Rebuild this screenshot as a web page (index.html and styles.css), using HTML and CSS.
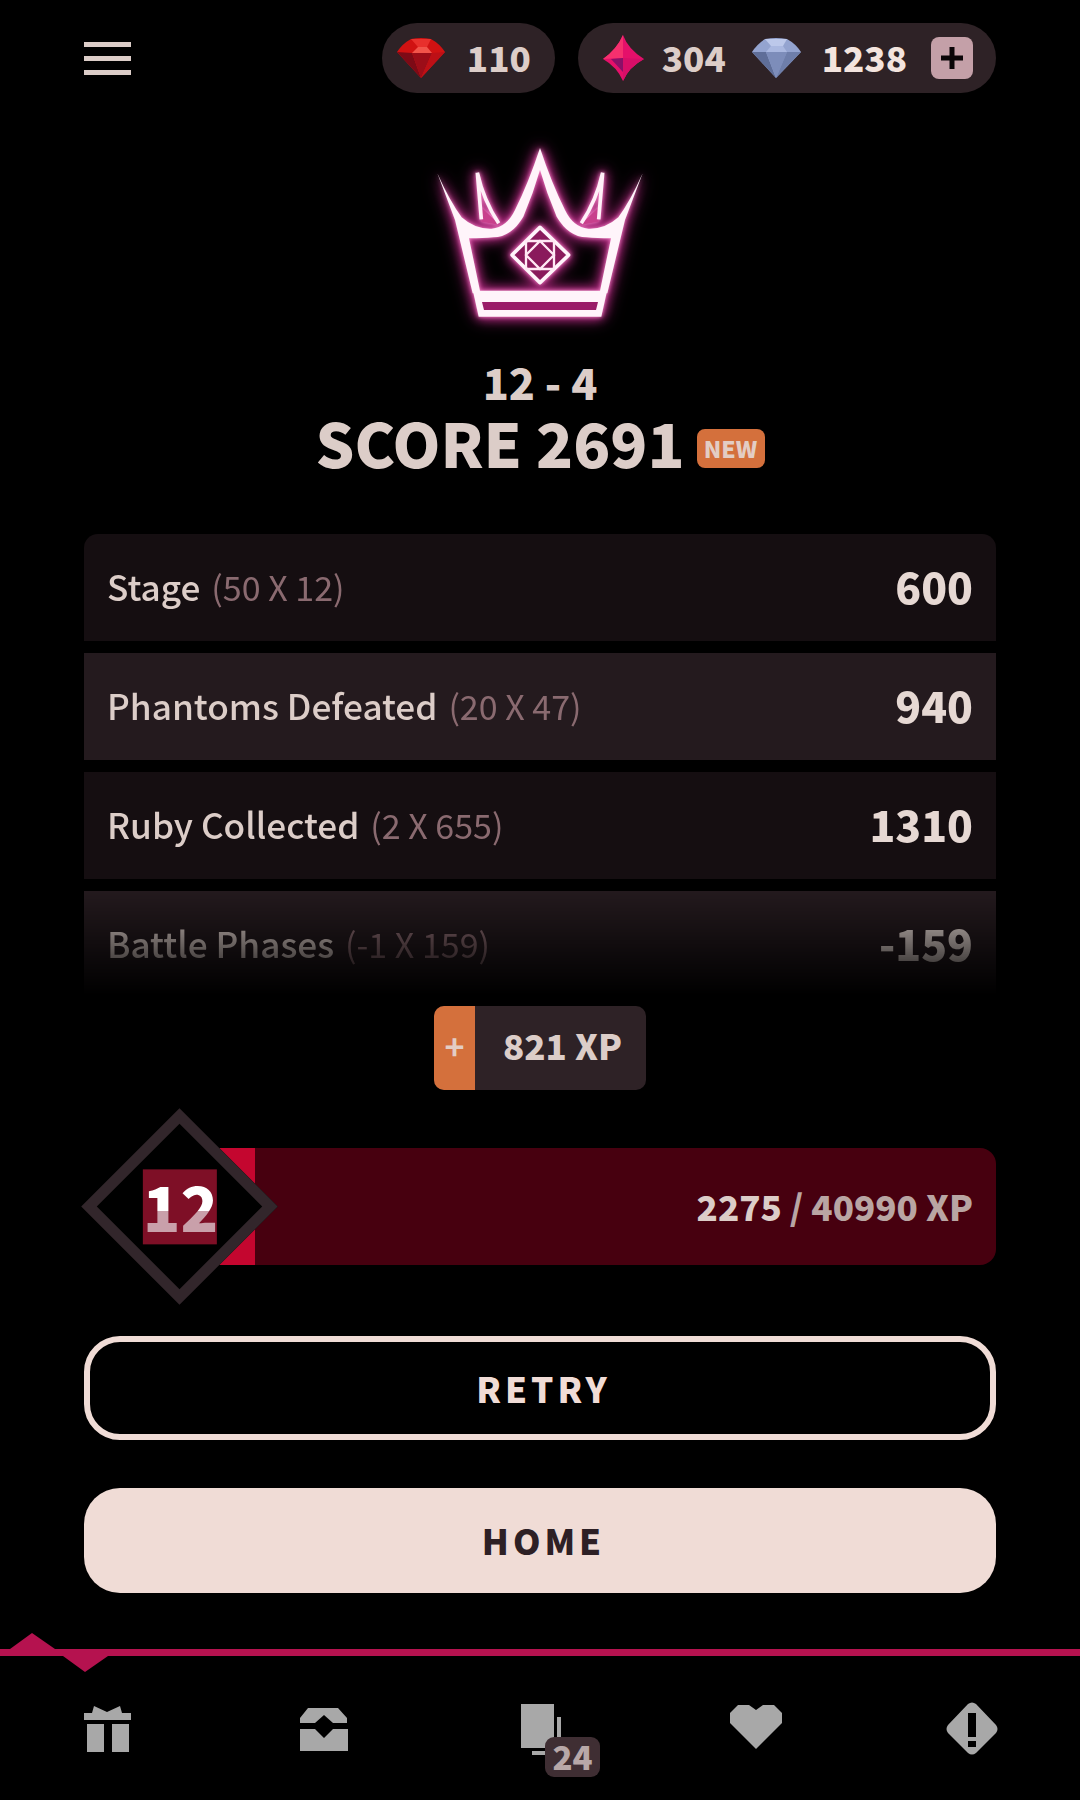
FILE: index.html
```html
<!DOCTYPE html>
<html lang="en">
<head>
  <meta charset="UTF-8">
  <title>Stage result</title>
  <link rel="stylesheet" href="styles.css">
</head>
<body>
  <div class="page">
    <header class="topbar">
      <button class="menu-btn"><span></span><span></span><span></span></button>
      <div class="wallet">
        <div class="pill">
          <svg class="gem" width="49" height="40" viewBox="0 0 49 40">
            <path d="M0 14Q5 6 14 1Q24 -1 34 1Q43 6 48 14L24 40z" fill="#d01212"/>
            <polygon points="14,1 34,1 30,9 21,9" fill="#e8302c"/>
            <polygon points="21,9 30,9 35,15 15,15" fill="#f2544a"/>
            <polygon points="0,14 15,15 24,40" fill="#7d0a16"/>
            <polygon points="15,15 35,15 24,40" fill="#9c0d18"/>
            <polygon points="35,15 48,14 24,40" fill="#bd1016"/>
          </svg>
          <span class="amount">110</span>
        </div>
        <div class="pill pill-wide">
          <svg class="gem" width="43" height="46" viewBox="0 0 43 46">
            <path d="M21 0Q26 14 42 24Q27 32 21 46Q15 32 1 24Q15 14 21 0z" fill="#e5106a"/>
            <path d="M21 0Q15 14 1 24L21 23z" fill="#f5306e"/>
            <path d="M21 23L42 24Q27 32 21 46z" fill="#d80e68"/>
            <polygon points="9,24 21,23 21,37" fill="#8a1068"/>
          </svg>
          <span class="amount amount-mid">304</span>
          <svg class="gem gem-diamond" width="49" height="40" viewBox="0 0 49 40">
            <path d="M0 14Q5 6 13 1Q24 -1 35 1Q44 6 49 14L24 40z" fill="#94a4d0"/>
            <polygon points="13,1 35,1 31,8 19,8" fill="#bcc8ea"/>
            <polygon points="19,8 31,8 35,14 14,14" fill="#aab8e0"/>
            <polygon points="0,14 14,14 24,40" fill="#5f6e98"/>
            <polygon points="14,14 35,14 24,40" fill="#7d8dba"/>
            <polygon points="35,14 49,14 24,40" fill="#6e7eaa"/>
          </svg>
          <span class="amount amount-light">1238</span>
          <button class="add-btn">
            <svg width="24" height="24" viewBox="0 0 24 24"><path d="M9.500 1h5v8.500H23v5h-8.500V23h-5v-8.500H1v-5h8.500z" fill="#0a0507"/></svg>
          </button>
        </div>
      </div>
    </header>

    <div class="crown">
      <svg width="280" height="200" viewBox="0 0 840 600">
        <path class="crown-tint" d="M247 235L244 275L298 284zM593 235L596 275L542 284z"/>
        <path class="crown-spike" d="M232 128L244 268M232 128Q250 210 296 280M608 128L596 268M608 128Q590 210 544 280"/>
        <path class="crown-body" fill-rule="evenodd" d="M112 130Q150 215 185 262Q225 298 275 296Q320 292 345 240Q385 160 420 54Q455 160 495 240Q520 292 565 296Q615 298 655 262Q690 215 728 130L675 270L622 490H218L165 270zM240 482L207 325Q250 325 280 322Q335 320 370 260Q400 190 420 120Q440 190 470 260Q505 320 560 322Q590 325 633 325L600 482z"/>
        <path class="crown-body" d="M220 488H620L604 560H236z"/>
        <path class="crown-band" d="M246 516H594L588 540H252z"/>
        <path class="crown-gem" d="M420 292L506 375L420 458L336 375z"/>
        <path class="crown-thin" d="M378 333H462V417H378zM420 333L462 375L420 417L378 375z"/>
      </svg>
    </div>

    <div class="stage-no">12 - 4</div>
    <div class="score">
      <span class="score-text">SCORE 2691</span>
      <span class="new-tag">NEW</span>
    </div>

    <div class="breakdown">
      <div class="row">
        <div class="row-label">Stage <span class="row-calc">(50 X 12)</span></div>
        <div class="row-value">600</div>
      </div>
      <div class="row row-alt">
        <div class="row-label">Phantoms Defeated <span class="row-calc">(20 X 47)</span></div>
        <div class="row-value">940</div>
      </div>
      <div class="row">
        <div class="row-label">Ruby Collected <span class="row-calc">(2 X 655)</span></div>
        <div class="row-value">1310</div>
      </div>
      <div class="row row-alt">
        <div class="row-label">Battle Phases <span class="row-calc">(-1 X 159)</span></div>
        <div class="row-value">-159</div>
      </div>
    </div>

    <div class="xp-gain">
      <span class="xp-plus">+</span>
      <span class="xp-amount">821 XP</span>
    </div>

    <div class="level">
      <div class="level-badge">
        <div class="level-num"><span>12</span></div>
      </div>
      <div class="level-bar">
        <div class="level-fill" style="width: 75px"></div>
        <div class="level-text"><b>2275</b> / 40990 XP</div>
      </div>
    </div>

    <button class="btn btn-outline">RETRY</button>
    <button class="btn btn-solid">HOME</button>

    <nav class="tabs">
      <div class="tab-marker">
        <svg width="120" height="40" viewBox="0 0 120 40">
          <polygon points="10,16 32,0 55,16" fill="#b5124f"/>
          <polygon points="63,23 108,23 85,39" fill="#b5124f"/>
        </svg>
      </div>
      <div class="tab-icons">
        <svg class="tab-icon" width="48" height="48" viewBox="0 0 48 48">
          <path d="M10 2L23 8 36 2 38 9H47V16H0V9H8zM3 20H20V48H3zM28 20H45V48H28z" fill="#a8a8a8"/>
        </svg>
        <svg class="tab-icon" width="48" height="48" viewBox="0 0 48 48">
          <path d="M0 14L8 4H38L47 14V19H33L24 11 15 19H0z" fill="#a8a8a8"/>
          <path d="M0 25H15L24 34 33 25H48V47H0z" fill="#a8a8a8"/>
        </svg>
        <div class="tab-cards">
          <svg class="tab-icon" width="48" height="56" viewBox="0 0 48 56">
            <path d="M5 0H38V44H5zM41 13H45V40H41zM16 47H40V51H16z" fill="#a8a8a8"/>
          </svg>
          <span class="tab-badge">24</span>
        </div>
        <svg class="tab-icon" width="54" height="48" viewBox="0 0 54 48">
          <path d="M9 1H20L27 6 34 1H45L53 9V19L27 45 1 19V9z" fill="#a8a8a8"/>
        </svg>
        <svg class="tab-icon" width="54" height="54" viewBox="0 0 54 54">
          <path transform="translate(0 -2)" fill-rule="evenodd" d="M23 2Q27 -1 31 2L51 23Q54 27 51 31L31 51Q27 54 23 51L3 31Q0 27 3 23zM23 11V35H31V11zM23 39V45H31V39z" fill="#a8a8a8"/>
        </svg>
      </div>
    </nav>
  </div>
</body>
</html>
```

FILE: styles.css
```css
* {
  box-sizing: border-box;
}

body {
  margin: 0;
  background-color: #000000;
  font-family: "Noto Sans CJK JP", "Noto Sans", sans-serif;
  color: #dccdc8;
}

button {
  font-family: inherit;
  padding: 0;
  border: none;
  background: none;
  cursor: pointer;
}

.page {
  width: 1080px;
  height: 1800px;
  padding: 23px 84px 0;
  overflow: hidden;
}

/* Top bar */
.topbar {
  display: flex;
  justify-content: space-between;
  align-items: center;
  height: 70px;
}

.menu-btn {
  display: flex;
  flex-direction: column;
  gap: 9px;
  width: 47px;
}

.menu-btn span {
  display: block;
  height: 5px;
  background-color: #dccdc8;
}

.wallet {
  display: flex;
  gap: 23px;
}

.pill {
  display: flex;
  align-items: center;
  height: 70px;
  padding: 0 24px 0 15px;
  background-color: #2e2226;
  border-radius: 35px;
}

.pill-wide {
  padding: 0 23px 0 24px;
}

.gem {
  flex: none;
}

.gem-diamond {
  margin-left: 26px;
}

.amount {
  margin-left: 21px;
  padding-bottom: 2px;
  font-size: 35px;
  font-weight: 900;
  line-height: 68px;
  color: #dccdc8;
}

.amount-mid {
  margin-left: 17px;
}

.amount-light {
  color: #f3e4de;
}

.add-btn {
  display: flex;
  justify-content: center;
  align-items: center;
  width: 42px;
  height: 42px;
  margin-left: 24px;
  background-color: #c4a0a8;
  border-radius: 8px;
}

/* Crown */
.crown {
  display: flex;
  justify-content: center;
  margin-top: 37px;
}

.crown svg {
  filter: drop-shadow(0 0 2px #ff90d0) drop-shadow(0 0 5px #b02880) drop-shadow(0 0 7px #98206c);
}

.crown-body {
  fill: #fff4fa;
}

.crown-spike {
  fill: none;
  stroke: #fff0f8;
  stroke-width: 11;
}

.crown-tint {
  fill: #c8408c;
}

.crown-band {
  fill: #9a1c68;
}

.crown-gem {
  fill: #8a1a5c;
  stroke: #fff4fa;
  stroke-width: 11;
  stroke-linejoin: round;
}

.crown-thin {
  fill: none;
  stroke: #ffe8f4;
  stroke-width: 7;
}

/* Score */
.stage-no {
  margin-top: 27px;
  font-size: 43px;
  font-weight: 900;
  line-height: 48px;
  text-align: center;
}

.score {
  display: flex;
  justify-content: center;
  align-items: center;
  gap: 12px;
  height: 76px;
  margin-top: -1px;
}

.score-text {
  font-size: 61px;
  font-weight: 900;
  line-height: 76px;
}

.new-tag {
  width: 68px;
  height: 39px;
  margin-top: 13px;
  background-color: #d4703c;
  border-radius: 8px;
  font-size: 23px;
  font-weight: 900;
  line-height: 39px;
  text-align: center;
  color: #e3cdc4;
}

/* Score breakdown */
.breakdown {
  display: flex;
  flex-direction: column;
  gap: 12px;
  height: 461px;
  margin-top: 54px;
  overflow: hidden;
  -webkit-mask-image: linear-gradient(#000 355px, transparent 461px);
  mask-image: linear-gradient(#000 355px, transparent 461px);
}

.row {
  display: flex;
  flex: none;
  justify-content: space-between;
  align-items: center;
  height: 107px;
  padding: 0 23px 4px;
  background-color: #150e11;
}

.row:first-child {
  border-radius: 14px 14px 0 0;
}

.row-alt {
  background-color: #241a1e;
}

.row-label {
  font-size: 35.200px;
  font-weight: 500;
  color: #dccdc8;
}

.row-calc {
  margin-left: 3px;
  font-size: 34px;
  font-weight: 400;
  color: #8a6a70;
}

.row-value {
  font-size: 42.500px;
  font-weight: 900;
  color: #e6d8d3;
}

/* XP gained */
.xp-gain {
  display: flex;
  width: 212px;
  height: 84px;
  margin: 11px auto 0;
  border-radius: 10px;
  background-color: #2e2226;
  overflow: hidden;
}

.xp-plus {
  width: 41px;
  background-color: #d4703c;
  font-size: 34px;
  font-weight: 700;
  line-height: 80px;
  text-align: center;
  color: #e3cdc4;
}

.xp-amount {
  flex: 1;
  padding-left: 4px;
  font-size: 35px;
  font-weight: 900;
  line-height: 78px;
  text-align: center;
  color: #dccdc8;
}

/* Level bar */
.level {
  position: relative;
  margin-top: 58px;
  padding-left: 96px;
}

.level-bar {
  display: flex;
  justify-content: flex-end;
  align-items: center;
  position: relative;
  height: 117px;
  padding: 0 23px 2px 0;
  background-color: #47000f;
  border-radius: 0 16px 16px 0;
}

.level-fill {
  position: absolute;
  left: 0;
  top: 0;
  bottom: 0;
  background-color: #c4062f;
}

.level-text {
  font-size: 35px;
  font-weight: 900;
  color: #b9a5a3;
}

.level-text b {
  font-weight: 900;
  color: #dccdc8;
}

.level-badge {
  position: absolute;
  left: 26px;
  top: -11px;
  z-index: 1;
  display: flex;
  justify-content: center;
  align-items: center;
  width: 139px;
  height: 139px;
  border: 11px solid #32262b;
  background-color: #000000;
  transform: rotate(45deg);
}

.level-num {
  width: 74px;
  height: 75px;
  flex: none;
  transform: rotate(-45deg);
  background-color: #7e0f26;
}

.level-num span {
  display: block;
  height: 75px;
  font-size: 62px;
  font-weight: 900;
  line-height: 72px;
  text-align: center;
  color: transparent;
  background: linear-gradient(#ffffff 55%, #c9a0aa 55%);
  -webkit-background-clip: text;
  background-clip: text;
}

/* Buttons */
.btn {
  display: block;
  width: 100%;
  height: 104px;
  padding: 0 0 2px 7px;
  font-size: 35px;
  font-weight: 900;
  letter-spacing: 4px;
  border-radius: 36px;
}

.btn-outline {
  margin-top: 71px;
  border: 6px solid #f0dcd6;
  color: #f0dcd6;
}

.btn-solid {
  height: 105px;
  margin-top: 48px;
  background-color: #f0dcd6;
  color: #2d2025;
}

/* Bottom tabs */
.tabs {
  position: relative;
  margin: 56px -84px 0;
  border-top: 7px solid #b5124f;
}

.tab-marker {
  position: absolute;
  left: 0;
  top: -23px;
  height: 40px;
}

.tab-icons {
  display: grid;
  grid-template-columns: repeat(5, 216px);
  justify-items: center;
  align-items: start;
  padding-top: 48px;
}

.tab-cards {
  position: relative;
  width: 48px;
}

.tab-icon {
  display: block;
  overflow: visible;
}

.tab-badge {
  position: absolute;
  left: 29px;
  top: 33px;
  width: 55px;
  height: 40px;
  background-color: #3f2e33;
  border-radius: 9px;
  font-size: 33px;
  font-weight: 900;
  line-height: 38px;
  text-align: center;
  color: #b8a8a8;
}
```
